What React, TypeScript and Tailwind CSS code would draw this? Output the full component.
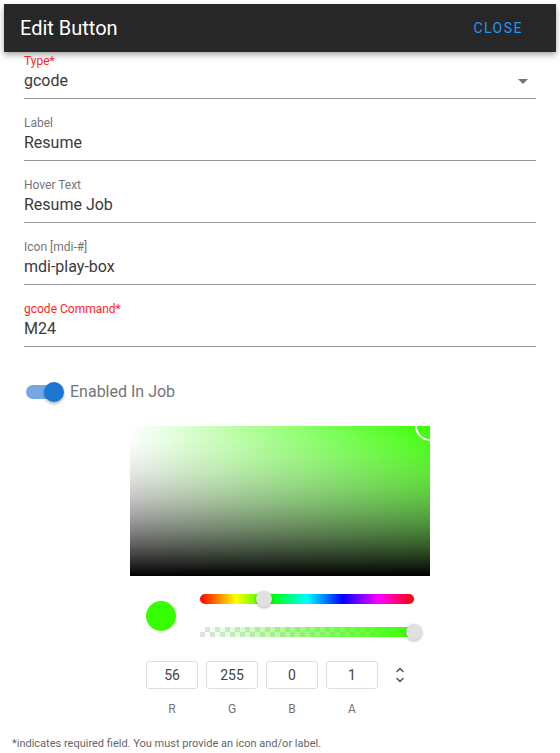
import { ChevronDown, ChevronUp } from "lucide-react";

const font = "font-['Roboto','Liberation_Sans',sans-serif]";

type FieldProps = {
  label: string;
  value: string;
  required?: boolean;
  select?: boolean;
  first?: boolean;
};

function Field({ label, value, required, select, first }: FieldProps) {
  return (
    <div className={first ? "mt-[2px]" : "mt-[17px]"}>
      <div
        className={`h-[14px] text-[12px] leading-[14px] ${
          required ? "text-[#ff1f1f]" : "text-[#757575]"
        }`}
      >
        {label}
        {required && "*"}
      </div>
      <div className="mt-[1px] flex items-center border-b border-[#949494] pb-[5px]">
        <div className="flex-1 text-[16px] leading-[24px] text-[#3a3a3a]">{value}</div>
        {select && (
          <div className="mr-[8px] h-0 w-0 border-x-[5px] border-t-[5px] border-x-transparent border-t-[#757575]" />
        )}
      </div>
    </div>
  );
}

function RgbaInput({ value, label }: { value: string; label: string }) {
  return (
    <div className="flex w-[52px] flex-col items-center">
      <div className="flex h-[28px] w-[52px] items-center justify-center rounded-[3px] border border-[#ddd] text-[14px] text-[#444]">
        {value}
      </div>
      <div className="mt-[13px] text-[12px] leading-[14px] text-[#757575]">{label}</div>
    </div>
  );
}

export default function App() {
  return (
    <div className={`relative h-[753px] w-[560px] overflow-hidden bg-white ${font}`}>
      {/* Header */}
      <header className="mx-1 mt-1 flex h-12 items-center justify-between bg-[#272727] pl-4 pr-[33px] shadow-[0_3px_6px_rgba(0,0,0,0.35)]">
        <h1 className="text-[20px] font-normal text-white">Edit Button</h1>
        <button className="text-[14px] font-normal tracking-[1.5px] text-[#2196f3]">CLOSE</button>
      </header>

      {/* Form */}
      <div className="px-6">
        <Field label="Type" value="gcode" required select first />
        <Field label="Label" value="Resume" />
        <Field label="Hover Text" value="Resume Job" />
        <Field label="Icon [mdi-#]" value="mdi-play-box" />
        <Field label="gcode Command" value="M24" required />

        <div className="mt-[33px] flex h-[24px] items-center">
          <div className="relative ml-[2px] h-[14px] w-[36px] rounded-full bg-[#73a8e3]">
            <div className="absolute -top-[3px] left-[18px] h-[20px] w-[20px] rounded-full bg-[#1976d2] shadow-[0_2px_3px_rgba(0,0,0,0.3)]" />
          </div>
          <span className="ml-[8px] text-[16px] text-[#757575]">Enabled In Job</span>
        </div>
      </div>

      {/* Color picker */}
      <div className="mx-auto mt-[22px] w-[300px]">
        <div className="relative h-[150px] w-[300px] overflow-hidden bg-[linear-gradient(to_right,#fff,#38ff00)]">
          {/* value gradient, unpremultiplied like a canvas gradient */}
          <div className="h-full w-full bg-[linear-gradient(to_bottom,rgba(255,255,255,0),rgba(230,230,230,0.1),rgba(204,204,204,0.2),rgba(179,179,179,0.3),rgba(153,153,153,0.4),rgba(128,128,128,0.5),rgba(102,102,102,0.6),rgba(77,77,77,0.7),rgba(51,51,51,0.8),rgba(26,26,26,0.9),#000)]" />
          <div className="absolute -right-[15px] -top-[15px] h-[30px] w-[30px] rounded-full border-2 border-white" />
        </div>

        <div className="flex items-center px-4 pt-[18px]">
          <div className="h-[30px] w-[30px] rounded-full bg-[#38ff00]" />
          <div className="ml-[24px] flex flex-1 flex-col">
            <div className="relative h-[10px] rounded-full bg-[linear-gradient(to_right,#f00,#ff0,#0f0,#0ff,#00f,#f0f,#f00)]">
              <div className="absolute -top-[3px] left-[56px] h-[16px] w-[16px] rounded-full bg-[#e0e0e0] shadow-[0_1px_3px_rgba(0,0,0,0.3)]" />
            </div>
            <div className="relative mt-[23px] h-[10px] bg-[repeating-conic-gradient(#e2e2e2_0%_25%,#fff_0%_50%)] bg-[length:10px_10px]">
              <div className="h-full w-full bg-[linear-gradient(to_right,transparent,#38ff00)]" />
              <div className="absolute -right-[8px] -top-[3px] h-[16px] w-[16px] rounded-full bg-[#e0e0e0] shadow-[0_1px_3px_rgba(0,0,0,0.3)]" />
            </div>
          </div>
        </div>

        <div className="flex px-4 pt-[24px]">
          <div className="flex gap-[8px]">
            <RgbaInput value="56" label="R" />
            <RgbaInput value="255" label="G" />
            <RgbaInput value="0" label="B" />
            <RgbaInput value="1" label="A" />
          </div>
          <div className="ml-[14px] flex h-[28px] w-[16px] flex-col items-center justify-center text-[#555]">
            <ChevronUp size={12} strokeWidth={3} className="-mb-[1px]" />
            <ChevronDown size={12} strokeWidth={3} className="-mt-[1px]" />
          </div>
        </div>
      </div>

      <p className="mt-[20px] pl-[12px] text-[11px] text-[#666]">
        *indicates required field. You must provide an icon and/or label.
      </p>
    </div>
  );
}
